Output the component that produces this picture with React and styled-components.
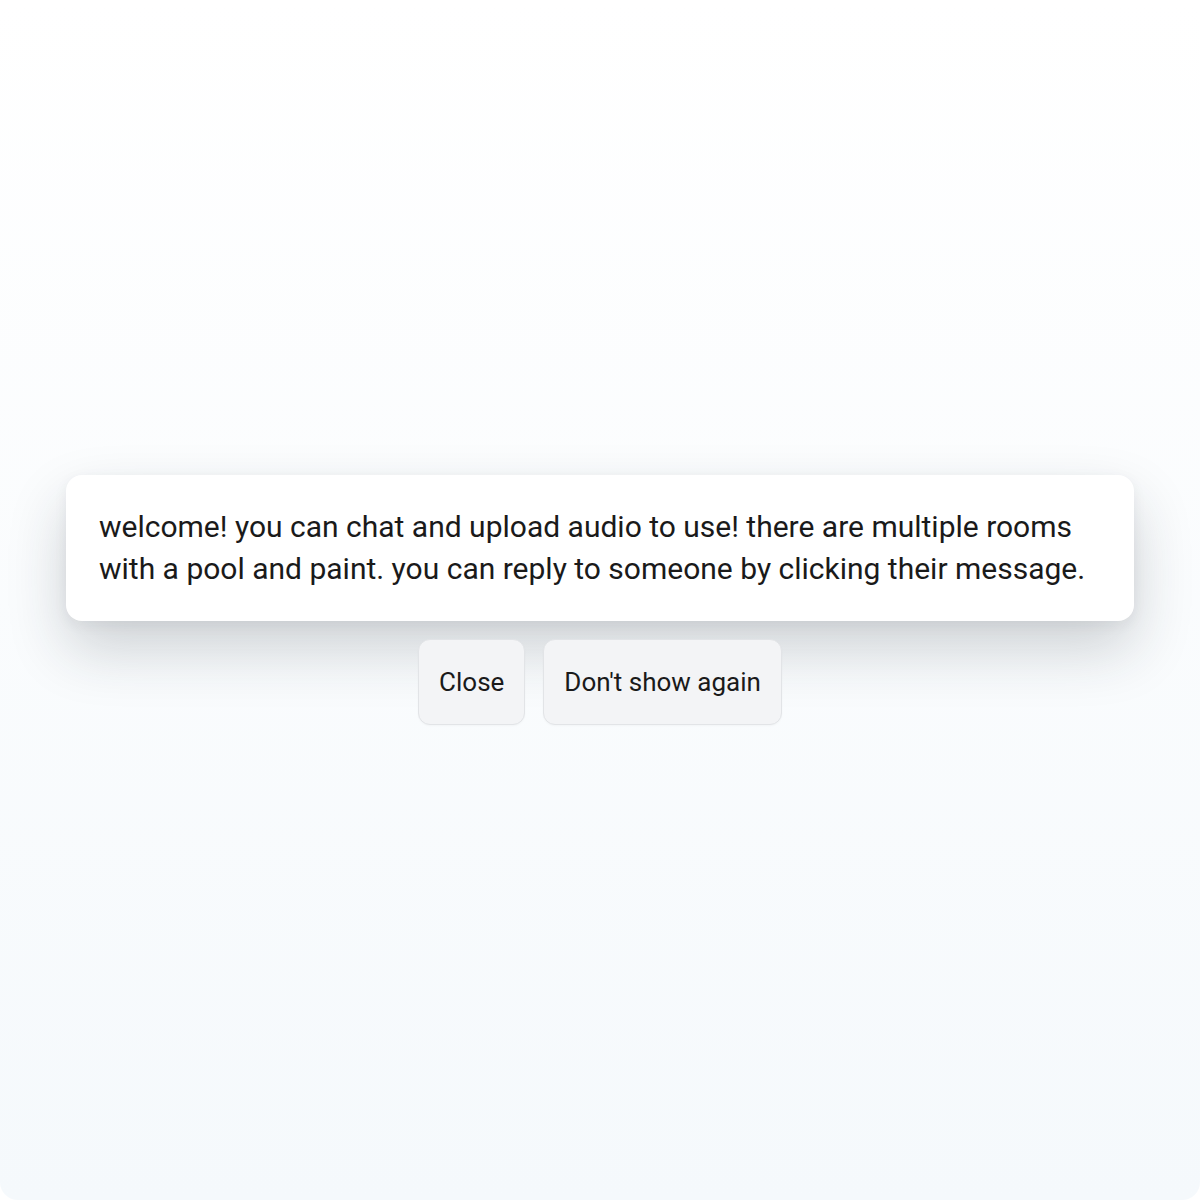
import React from "react";
import styled, { createGlobalStyle } from "styled-components";

const GlobalStyle = createGlobalStyle`
  html, body {
    margin: 0;
    padding: 0;
    height: 100%;
  }
  body {
    font-family: Roboto, "Liberation Sans", sans-serif;
    background: #ffffff;
  }
  #root {
    height: 100%;
  }
`;

const Page = styled.div`
  height: 1200px;
  box-sizing: border-box;
  border-radius: 18px;
  background: linear-gradient(180deg, #ffffff 0%, #f5f9fc 100%);
  display: flex;
  flex-direction: column;
  align-items: center;
  justify-content: center;
  padding: 0 66px;
`;

const Popup = styled.div`
  display: flex;
  flex-direction: column;
  align-items: center;
  gap: 18px;
  width: 100%;
`;

const MessageCard = styled.div`
  width: 100%;
  box-sizing: border-box;
  background: #ffffff;
  border-radius: 16px;
  padding: 31px 33px;
  font-size: 30px;
  line-height: 42px;
  color: #1a1a1a;
  box-shadow: 0 28px 60px rgba(30, 40, 50, 0.2), 0 4px 14px rgba(30, 40, 50, 0.06);
`;

const ButtonRow = styled.div`
  display: flex;
  gap: 18px;
`;

const Button = styled.button`
  font-family: inherit;
  font-size: 26px;
  line-height: 42px;
  color: #1a1a1a;
  background: #f3f4f6;
  border: 1px solid #e2e4e7;
  border-radius: 12px;
  padding: 21px 20px;
  cursor: pointer;
  box-shadow: 0 1px 2px rgba(0, 0, 0, 0.03);
`;

export default function App() {
  return (
    <>
      <GlobalStyle />
      <Page>
        <Popup>
          <MessageCard>
            welcome! you can chat and upload audio to use! there are multiple
            rooms with a pool and paint. you can reply to someone by clicking
            their message.
          </MessageCard>
          <ButtonRow>
            <Button>Close</Button>
            <Button>Don't show again</Button>
          </ButtonRow>
        </Popup>
      </Page>
    </>
  );
}
